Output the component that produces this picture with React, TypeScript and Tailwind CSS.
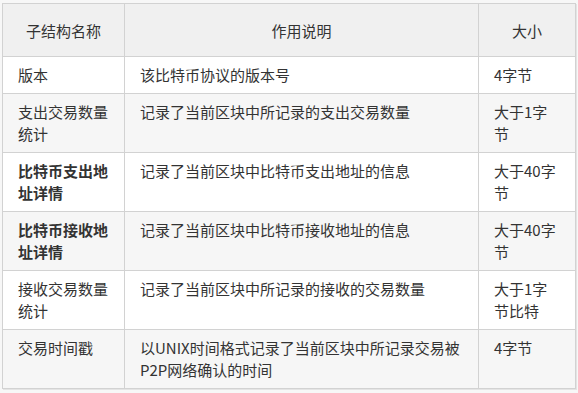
import React from "react";

type Row = { name: React.ReactNode; bold?: boolean; desc: React.ReactNode; size: React.ReactNode; bg: string };

const rows: Row[] = [
  { name: "版本", desc: "该比特币协议的版本号", size: "4字节", bg: "bg-white" },
  {
    name: (<>支出交易数量<br />统计</>),
    desc: "记录了当前区块中所记录的支出交易数量",
    size: (<>大于1字<br />节</>),
    bg: "bg-[#f6f6f6]",
  },
  {
    name: (<>比特币支出地<br />址详情</>),
    bold: true,
    desc: "记录了当前区块中比特币支出地址的信息",
    size: (<>大于40字<br />节</>),
    bg: "bg-white",
  },
  {
    name: (<>比特币接收地<br />址详情</>),
    bold: true,
    desc: "记录了当前区块中比特币接收地址的信息",
    size: (<>大于40字<br />节</>),
    bg: "bg-[#f6f6f6]",
  },
  {
    name: (<>接收交易数量<br />统计</>),
    desc: "记录了当前区块中所记录的接收的交易数量",
    size: (<>大于1字<br />节比特</>),
    bg: "bg-white",
  },
  {
    name: "交易时间戳",
    desc: (<>以UNIX时间格式记录了当前区块中所记录交易被<br />P2P网络确认的时间</>),
    size: "4字节",
    bg: "bg-[#f6f6f6]",
  },
];

export default function App() {
  return (
    <div
      className="w-[578px] h-[393px] bg-[#f7f7f7] pl-[2px] pt-[3px] text-[#333] text-[15px] leading-[22px]"
      style={{ fontFamily: '"Microsoft YaHei", "Noto Sans CJK SC", "Noto Sans", sans-serif' }}
    >
      <table className="border-collapse table-fixed w-[573px] shadow-[1px_1px_0_0_#e4e4e4]">
        <colgroup>
          <col className="w-[122px]" />
          <col className="w-[354px]" />
          <col className="w-[97px]" />
        </colgroup>
        <thead>
          <tr className="bg-[#f0f0f0]">
            <th className="border border-[#d2d2d2] font-normal text-center pt-[16px] pb-[14px]">子结构名称</th>
            <th className="border border-[#d2d2d2] font-normal text-center pt-[16px] pb-[14px]">作用说明</th>
            <th className="border border-[#d2d2d2] font-normal text-center pt-[16px] pb-[14px]">大小</th>
          </tr>
        </thead>
        <tbody>
          {rows.map((r, i) => (
            <tr key={i} className={r.bg}>
              <td className={`border border-[#d2d2d2] align-top whitespace-nowrap pl-[15px] pr-[4px] py-[7px] ${r.bold ? "font-bold" : ""}`}>
                {r.name}
              </td>
              <td className="border border-[#d2d2d2] align-top whitespace-nowrap pl-[15px] pr-[2px] py-[7px]">{r.desc}</td>
              <td className="border border-[#d2d2d2] align-top whitespace-nowrap pl-[15px] pr-[2px] py-[7px]">{r.size}</td>
            </tr>
          ))}
        </tbody>
      </table>
    </div>
  );
}
